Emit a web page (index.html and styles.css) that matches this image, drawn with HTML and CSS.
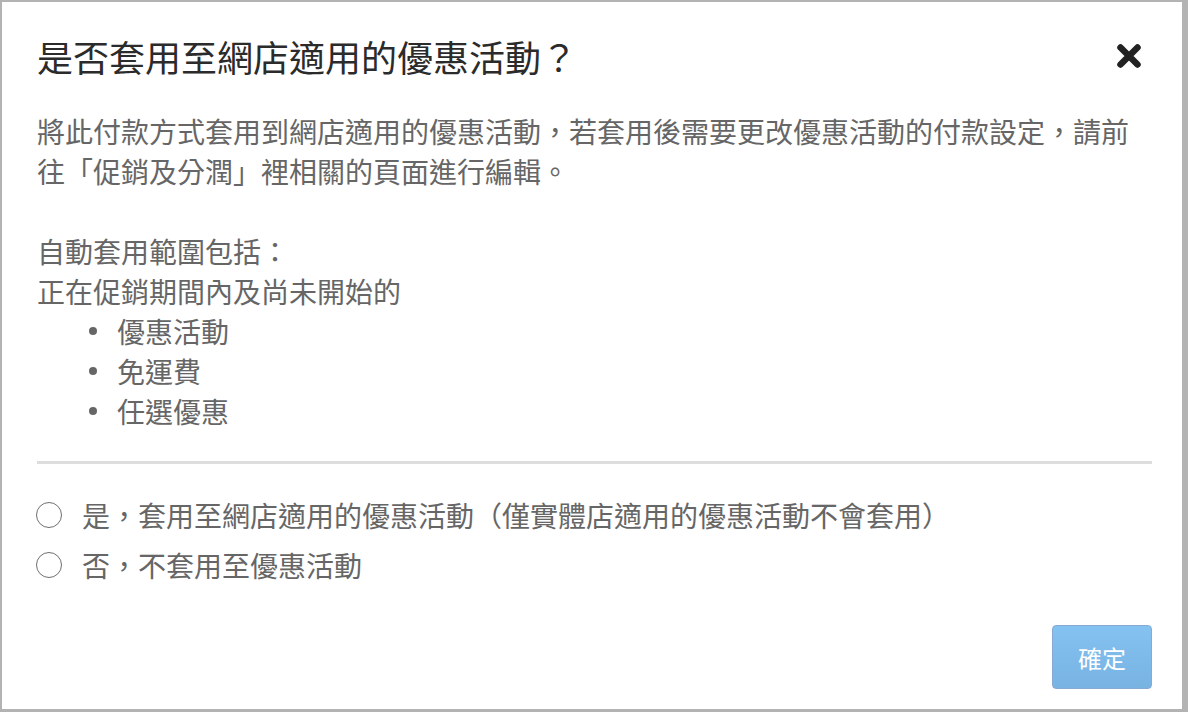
FILE: index.html
```html
<!DOCTYPE html>
<html lang="zh-Hant">
<head>
<meta charset="utf-8">
<title>是否套用至網店適用的優惠活動？</title>
<link rel="stylesheet" href="styles.css">
</head>
<body>
<div class="dialog">
  <div class="header">
    <h1 class="title">是否套用至網店適用的優惠活動？</h1>
    <button class="close" type="button" aria-label="關閉">
      <svg width="26" height="26" viewBox="0 0 26 26"><path d="M4.5 4.5 L21.5 21.5 M21.5 4.5 L4.5 21.5" stroke="#222" stroke-width="6.5" stroke-linecap="round"/></svg>
    </button>
  </div>
  <div class="body">
    <p class="text">將此付款方式套用到網店適用的優惠活動，若套用後需要更改優惠活動的付款設定，請前往「促銷及分潤」裡相關的頁面進行編輯。</p>
    <p class="text spaced">自動套用範圍包括：<br>正在促銷期間內及尚未開始的</p>
    <ul class="list">
      <li>優惠活動</li>
      <li>免運費</li>
      <li>任選優惠</li>
    </ul>
    <hr class="divider">
    <div class="options">
      <label class="option"><span class="radio"></span><span>是，套用至網店適用的優惠活動（僅實體店適用的優惠活動不會套用）</span></label>
      <label class="option"><span class="radio"></span><span>否，不套用至優惠活動</span></label>
    </div>
  </div>
  <div class="footer">
    <button class="confirm" type="button">確定</button>
  </div>
</div>
</body>
</html>
```
FILE: styles.css
```css
html, body {
  margin: 0;
  padding: 0;
}
body {
  background: #b3b3b3;
  font-family: "Noto Sans CJK TC", "Noto Sans", sans-serif;
  width: 1188px;
  height: 712px;
  overflow: hidden;
  padding-top: 2px;
  box-sizing: border-box;
}
.dialog {
  margin: 0 6px 0 2px;
  height: 707px;
  background: #fff;
  display: flex;
  flex-direction: column;
  box-sizing: border-box;
  padding: 0 30px 0 35px;
}
.header {
  display: flex;
  justify-content: space-between;
  align-items: center;
  padding-top: 30px;
}
.title {
  margin: 0;
  font-size: 36px;
  line-height: 48px;
  font-weight: normal;
  color: #2b2b2b;
}
.close {
  border: 0;
  background: none;
  padding: 0;
  margin-right: 10px;
  width: 26px;
  height: 26px;
  display: flex;
}
.body {
  color: #666;
  font-size: 28px;
  line-height: 40px;
  padding-top: 31px;
}
.text {
  margin: 0;
}
.spaced {
  margin-top: 40px;
}
.list {
  list-style: none;
  margin: 0;
  padding: 0 0 0 52px;
}
.list li {
  display: flex;
  align-items: center;
}
.list li::before {
  content: "";
  width: 8px;
  height: 8px;
  border-radius: 50%;
  background: #666;
  margin-right: 20px;
}
.divider {
  border: 0;
  height: 3px;
  background: #ddd;
  margin: 30px 0 0 0;
}
.options {
  display: flex;
  flex-direction: column;
  gap: 10px;
  padding-top: 31px;
}
.option {
  display: flex;
  align-items: center;
}
.radio {
  width: 26px;
  height: 26px;
  border: 1.5px solid #707070;
  border-radius: 50%;
  box-sizing: border-box;
  margin-left: -1px;
  margin-right: 20px;
}
.footer {
  margin-top: auto;
  display: flex;
  justify-content: flex-end;
  padding-bottom: 20px;
}
.confirm {
  width: 100px;
  height: 64px;
  border: 1.5px solid #86aad4;
  border-radius: 4px;
  background: linear-gradient(#84c2f1, #78b3e2);
  color: #fff;
  font-family: "Noto Sans CJK TC", "Noto Sans", sans-serif;
  font-size: 24px;
  padding: 0;
}
```
